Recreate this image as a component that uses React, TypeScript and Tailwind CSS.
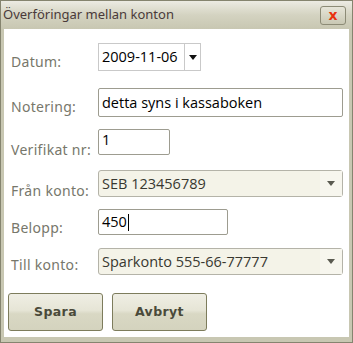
import type { ReactElement } from "react";

const labelCls =
  "w-[90px] shrink-0 pl-[3px] text-[14px] tracking-[0.3px] text-[#77776b] font-['Noto_Sans','DejaVu_Sans',sans-serif]";
const valueFont = "font-['Open_Sans','Noto_Sans',sans-serif] text-[14.5px]";

function Caret(): ReactElement {
  return (
    <svg width="8" height="5" viewBox="0 0 8 5" aria-hidden>
      <path d="M0 0h8L4 5z" fill="#5a5a50" />
    </svg>
  );
}

function Select({ value }: { value: string }): ReactElement {
  return (
    <div className="flex h-[27px] w-[245px] items-center rounded-[3px] border border-[#b4b3a8] bg-[#f4f3e8]">
      <span className={`flex-1 pl-[3px] text-[#383830] ${valueFont}`}>{value}</span>
      <span className="flex h-full w-[22px] items-center justify-center bg-[#f7f6ee]">
        <Caret />
      </span>
    </div>
  );
}

export default function App(): ReactElement {
  return (
    <div className="h-[343px] w-[353px] bg-white">
      <div className="flex h-full w-full flex-col border border-[#85846f] bg-[#c8c7b2]">
        <div className="flex h-[28px] items-center justify-between bg-gradient-to-b from-[#ecebe3] via-[#d4d3c1] to-[#c8c7b2] pl-[2px] pr-[6px]">
          <span className="text-[13px] text-[#4a3a3a] font-['Noto_Sans',sans-serif]">
            Överföringar mellan konton
          </span>
          <button
            type="button"
            className="flex h-[19px] w-[26px] items-center justify-center rounded-[3px] border border-[#8c8b76] bg-gradient-to-b from-[#e6e5d8] to-[#c9c8b4]"
          >
            <span className="text-[14px] font-bold leading-none text-[#e8310e] font-['DejaVu_Sans',sans-serif]">
              x
            </span>
          </button>
        </div>
        <div className="mx-[3px] mb-[5px] flex flex-1 flex-col bg-white px-[4px] pt-[14px]">
          <div className="flex h-[28px] items-center">
            <span className={`${labelCls} mt-[8px]`}>Datum:</span>
            <div className="flex h-[28px] w-[103px] border border-[#c9c9c9] bg-white">
              <span className={`flex-1 pl-[3px] leading-[26px] text-black ${valueFont}`}>2009-11-06</span>
              <span className="flex w-[16px] items-center justify-center border-l border-[#c9c9c9]">
                <svg width="8" height="5" viewBox="0 0 8 5" aria-hidden>
                  <path d="M0 0h8L4 5z" fill="#111" />
                </svg>
              </span>
            </div>
          </div>

          <div className="mt-[17px] flex h-[29px] items-center">
            <span className={`${labelCls} mt-[8px]`}>Notering:</span>
            <div className="flex h-[29px] w-[245px] items-center rounded-[2px] border border-[#9d9c90] bg-white">
              <span className={`pl-[3px] text-black ${valueFont}`}>detta syns i kassaboken</span>
            </div>
          </div>

          <div className="mt-[12px] flex h-[26px] items-center">
            <span className={`${labelCls} mt-[14px]`}>Verifikat nr:</span>
            <div className="flex h-[26px] w-[72px] items-start rounded-[2px] border border-[#9d9c90] bg-white">
              <span className={`pl-[3px] leading-[20px] text-black ${valueFont}`}>1</span>
            </div>
          </div>

          <div className="mt-[15px] flex h-[27px] items-center">
            <span className={`${labelCls} mt-[14px]`}>Från konto:</span>
            <Select value="SEB 123456789" />
          </div>

          <div className="mt-[12px] flex h-[26px] items-center">
            <span className={`${labelCls} mt-[10px]`}>Belopp:</span>
            <div className="flex h-[26px] w-[130px] items-center rounded-[2px] border border-[#9d9c90] bg-white">
              <span className={`pl-[3px] text-black ${valueFont}`}>450</span>
              <span className="ml-[1px] h-[17px] w-px bg-black" />
            </div>
          </div>

          <div className="mt-[13px] flex h-[27px] items-center">
            <span className={`${labelCls} mt-[6px]`}>Till konto:</span>
            <Select value="Sparkonto 555-66-77777" />
          </div>

          <div className="mt-[18px] flex gap-[9px]">
            {["Spara", "Avbryt"].map((t) => (
              <button
                key={t}
                type="button"
                className="h-[38px] w-[95px] rounded-[3px] border border-[#7d7c5c] bg-[linear-gradient(#efeee4_0%,#e6e5d6_45%,#d9d8c4_55%,#d4d3be_100%)] text-[12.5px] font-bold tracking-[0.4px] text-[#4a4a3a] font-['DejaVu_Sans',sans-serif]"
              >
                {t}
              </button>
            ))}
          </div>
        </div>
      </div>
    </div>
  );
}
